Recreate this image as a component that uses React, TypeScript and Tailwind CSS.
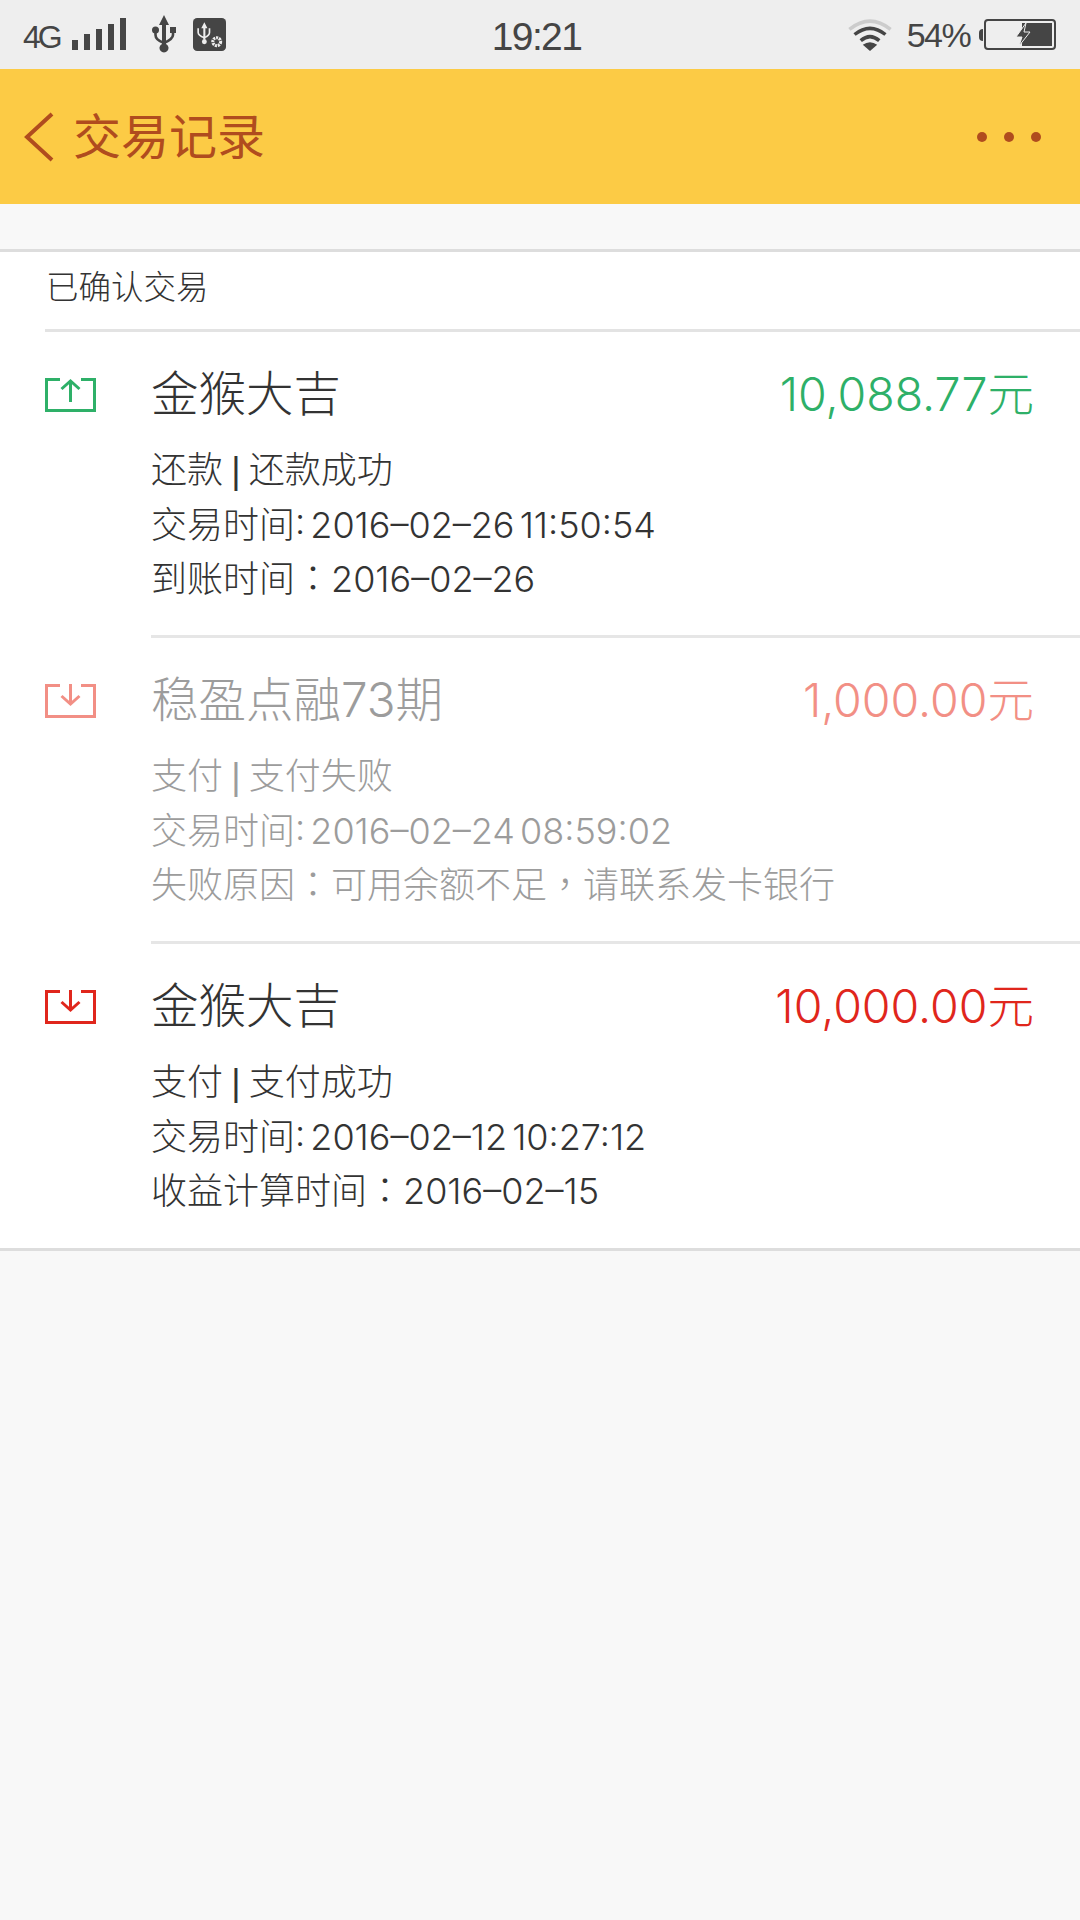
const font = { fontFamily: '"Inter", "Noto Sans CJK SC", sans-serif' };
const statusFont = { fontFamily: '"Liberation Sans", sans-serif' };

type Tx = {
  title: string;
  amount: string;
  lines: string[];
  kind: 'out' | 'in';
  iconColor: string;
  amountClass: string;
  titleClass: string;
  lineClass: string;
};

const rows: Tx[] = [
  {
    title: '金猴大吉',
    amount: '10,088.77元',
    lines: ['还款 | 还款成功', '交易时间: 2016–02–26 11:50:54', '到账时间：2016–02–26'],
    kind: 'out',
    iconColor: '#2eb068',
    amountClass: 'text-[#2eb068]',
    titleClass: 'text-[#333333]',
    lineClass: 'text-[#333333]',
  },
  {
    title: '稳盈点融73期',
    amount: '1,000.00元',
    lines: ['支付 | 支付失败', '交易时间: 2016–02–24 08:59:02', '失败原因：可用余额不足，请联系发卡银行'],
    kind: 'in',
    iconColor: '#f28f85',
    amountClass: 'text-[#f28f85]',
    titleClass: 'text-[#9c9c9c]',
    lineClass: 'text-[#9c9c9c]',
  },
  {
    title: '金猴大吉',
    amount: '10,000.00元',
    lines: ['支付 | 支付成功', '交易时间: 2016–02–12 10:27:12', '收益计算时间：2016–02–15'],
    kind: 'in',
    iconColor: '#e0261c',
    amountClass: 'text-[#e0261c]',
    titleClass: 'text-[#333333]',
    lineClass: 'text-[#333333]',
  },
];

// fullwidth colon and comma sit centred in their cell in the picture, as in the TC font
function DetailLine({ text }: { text: string }) {
  const parts = text.split(/([：，|])/);
  return (
    <p className="h-[54.5px] whitespace-nowrap">
      {parts.map((part, i) => {
        if (part === '：' || part === '，') {
          return (
            <span key={i} className="font-['Noto_Sans_CJK_TC'] leading-none">
              {part}
            </span>
          );
        }
        if (part === '|') {
          return (
            <span key={i} className="mx-[3px] font-['Liberation_Sans'] leading-none">
              {part}
            </span>
          );
        }
        return part;
      })}
    </p>
  );
}

function TrayIcon({ kind, color }: { kind: 'out' | 'in'; color: string }) {
  return (
    <svg width="51" height="34" viewBox="0 0 51 34" fill="none" stroke={color}>
      <path d="M15 1.5H1.5V32.5H49.5V1.5H36" strokeWidth="3" />
      {kind === 'out' ? (
        <path d="M25.5 24V3M16.5 11L25.5 3L34.5 11" strokeWidth="3" />
      ) : (
        <path d="M25.5 0V20M16.5 12L25.5 20L34.5 12" strokeWidth="3" />
      )}
    </svg>
  );
}

function StatusBar() {
  return (
    <div className="flex h-[69px] items-center bg-[#eeeeee] text-[#454545]" style={statusFont}>
      <div className="flex flex-1 items-center pl-[23px]">
        <span className="mt-[4px] text-[32px] leading-none tracking-[-3px]">4G</span>
        <div className="ml-[12px] mt-[-1px] flex h-[32px] items-end gap-[6px]">
          <span className="h-[10px] w-[6px] bg-[#454545]" />
          <span className="h-[16px] w-[6px] bg-[#454545]" />
          <span className="h-[21px] w-[6px] bg-[#454545]" />
          <span className="h-[26px] w-[6px] bg-[#454545]" />
          <span className="h-[32px] w-[6px] bg-[#454545]" />
        </div>
        <svg className="ml-[26px]" width="24" height="40" viewBox="0 0 24 40" fill="#454545">
          <path d="M12 0L17 10H14V29A4.5 4.5 0 1 1 10 29V10H7Z" />
          <circle cx="3.5" cy="15" r="3.5" />
          <rect x="18" y="12" width="6" height="6" />
          <path d="M3.5 15V20Q3.5 25 12 28Q21 24 21 20V15" fill="none" stroke="#454545" strokeWidth="2.6" />
        </svg>
        <svg className="ml-[17px]" width="33" height="33" viewBox="0 0 32 32">
          <rect width="32" height="32" rx="4" fill="#454545" />
          <path d="M11 4L14 10H12V21H10V10H8Z" fill="#eeeeee" />
          <path d="M5 10V14Q5 17 11 19Q16 17 16 14V10" fill="none" stroke="#eeeeee" strokeWidth="1.6" />
          <circle cx="11" cy="23" r="2.4" fill="#eeeeee" />
          <circle cx="23" cy="23" r="3.8" fill="none" stroke="#eeeeee" strokeWidth="3" strokeDasharray="2 0.8" />
        </svg>
      </div>
      <span className="mr-[6px] mt-[3px] text-[39px] leading-none tracking-[-1.6px]">19:21</span>
      <div className="flex flex-1 items-center justify-end pr-[24px]">
        <svg width="46" height="35" viewBox="0 0 44 34" fill="none">
          <path d="M2 12Q22 -4 42 12" stroke="#cccccc" strokeWidth="3.4" />
          <path d="M7 17Q22 5 37 17" stroke="#454545" strokeWidth="3.4" />
          <path d="M13 23Q22 15 31 23" stroke="#454545" strokeWidth="3.4" />
          <path d="M22 33L15 27Q22 22 29 27Z" fill="#454545" />
        </svg>
        <span className="ml-[14px] mt-[1px] text-[34px] leading-none tracking-[-1.6px]">54%</span>
        <span className="ml-[9px] h-[12px] w-[4px] rounded-l-full bg-[#454545]" />
        <div className="relative ml-[1px] h-[31px] w-[72px] rounded-[4px] border-2 border-[#454545]">
          <span className="absolute bottom-[2px] right-[2px] top-[2px] w-[30px] bg-[#454545]" />
          <svg className="absolute left-[29px] top-[2px]" width="16" height="23" viewBox="0 0 16 23">
            <path d="M11 0L1 14H7L4 23L15 9H9Z" fill="#454545" stroke="#eeeeee" strokeWidth="1" />
          </svg>
        </div>
      </div>
    </div>
  );
}

export default function App() {
  return (
    <div className="flex min-h-[1920px] flex-col bg-[#f8f8f8] font-light" style={font}>
      <StatusBar />

      <header className="flex h-[135px] items-center bg-[#fccb45] pl-[24px] pr-[39px]">
        <svg width="30" height="50" viewBox="0 0 30 50" fill="none" stroke="#b04c1e" strokeWidth="4">
          <path d="M28 2L3 25L28 48" />
        </svg>
        <h1 className="ml-[19px] text-[48px] font-normal leading-none text-[#b04c1e]">交易记录</h1>
        <div className="ml-auto flex gap-[17px]">
          <span className="size-[10px] rounded-full bg-[#b04c1e]" />
          <span className="size-[10px] rounded-full bg-[#b04c1e]" />
          <span className="size-[10px] rounded-full bg-[#b04c1e]" />
        </div>
      </header>

      <section className="mt-[45px] border-y-[3px] border-[#dddddd] bg-white">
        <div className="ml-[45px] flex h-[80px] items-center border-b-[3px] border-[#e3e3e3] pb-[4px]">
          <span className="pl-[1px] text-[32.5px] leading-none text-[#333333]">已确认交易</span>
        </div>

        {rows.map((row, i) => (
          <div key={i} className="flex">
            <div className="w-[151px] shrink-0 pl-[45px] pt-[46px]">
              <TrayIcon kind={row.kind} color={row.iconColor} />
            </div>
            <div className={`min-w-0 flex-1 pt-[31px] ${i < rows.length - 1 ? 'h-[306px] border-b-[3px] border-[#e6e6e6]' : 'h-[304px]'}`}>
              <div className="flex items-center justify-between pr-[46px]">
                <span className={`text-[47.5px] leading-[62px] ${row.titleClass}`}>{row.title}</span>
                <span className={`text-[46.5px] leading-[62px] ${row.amountClass}`}>{row.amount}</span>
              </div>
              <div className={`mt-[18px] text-[36px] leading-[54.5px] [word-spacing:-5px] ${row.lineClass}`}>
                {row.lines.map((line) => (
                  <DetailLine key={line} text={line} />
                ))}
              </div>
            </div>
          </div>
        ))}
      </section>
    </div>
  );
}
